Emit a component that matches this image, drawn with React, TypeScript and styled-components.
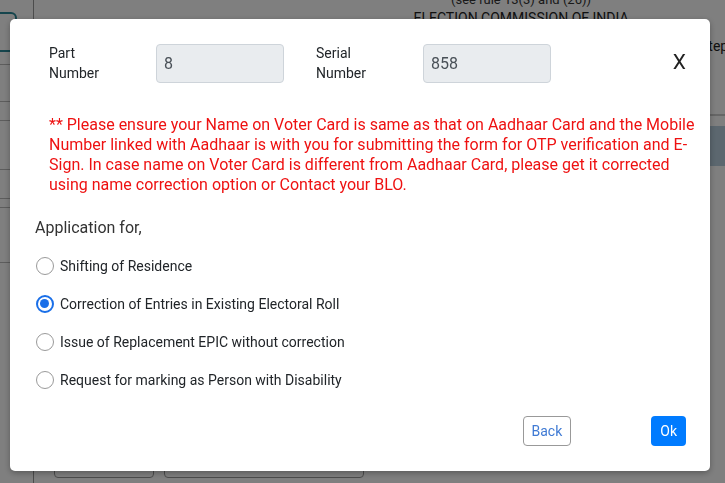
import React, { useState } from "react";
import styled, { createGlobalStyle } from "styled-components";

const options = [
  "Shifting of Residence",
  "Correction of Entries in Existing Electoral Roll",
  "Issue of Replacement EPIC without correction",
  "Request for marking as Person with Disability",
];

const App: React.FC = () => {
  const [selected, setSelected] = useState(1);

  return (
    <>
      <GlobalStyle />
      <Page>
        <Sidebar>
          <SideTab />
          <SideLine $gap={12} />
          <SideLine $gap={36} />
          <SideLine $gap={18} />
          <SideLine $gap={48} />
          <SideLine $gap={28} />
          <SideLine $gap={8} />
          <SideLine $gap={54} />
        </Sidebar>
        <Main>
          <RuleNote>(see rule 13(3) and (26))</RuleNote>
          <Heading>ELECTION COMMISSION OF INDIA</Heading>
          <StepRow>Steps</StepRow>
          <Divider />
          <Band />
          <BottomRow>
            <BottomBox $w={100} />
            <BottomBox $w={200} />
          </BottomRow>
        </Main>
      </Page>

      <Overlay />

      <Modal>
        <TopSection>
          <FieldRow>
            <FieldLabel>
              Part
              <br />
              Number
            </FieldLabel>
            <ReadOnlyInput value="8" readOnly />
            <FieldLabel $spaced>
              Serial
              <br />
              Number
            </FieldLabel>
            <ReadOnlyInput value="858" readOnly />
            <CloseButton>X</CloseButton>
          </FieldRow>

          <Warning>
            ** Please ensure your Name on Voter Card is same as that on Aadhaar Card and the Mobile
            Number linked with Aadhaar is with you for submitting the form for OTP verification and
            E-Sign. In case name on Voter Card is different from Aadhaar Card, please get it
            corrected using name correction option or Contact your BLO.
          </Warning>
        </TopSection>

        <SectionTitle>Application for,</SectionTitle>

        <OptionList>
          {options.map((label, i) => (
            <OptionRow key={label} onClick={() => setSelected(i)}>
              <RadioMark $checked={selected === i} />
              <OptionText>{label}</OptionText>
            </OptionRow>
          ))}
        </OptionList>

        <Footer>
          <BackButton>Back</BackButton>
          <OkButton>Ok</OkButton>
        </Footer>
      </Modal>
    </>
  );
};

const GlobalStyle = createGlobalStyle`
  html, body {
    margin: 0;
    padding: 0;
    width: 100%;
    height: 100%;
    overflow: hidden;
  }
  body {
    font-family: Roboto, "Liberation Sans", Arial, sans-serif;
    background: #ffffff;
    color: #212529;
  }
  * {
    box-sizing: border-box;
  }
`;

/* page behind the dialog */
const Page = styled.div`
  display: flex;
  height: 100vh;
  overflow: hidden;
`;

const Sidebar = styled.div`
  width: 34px;
  flex-shrink: 0;
  border-right: 1px solid #999;
  display: flex;
  flex-direction: column;
  padding-top: 12px;
`;

const SideTab = styled.div`
  height: 40px;
  width: 17px;
  border: 2px solid #2b8a9a;
  border-left: none;
  border-radius: 0 6px 6px 0;
`;

const SideLine = styled.div<{ $gap: number }>`
  margin-top: ${(p) => p.$gap}px;
  height: 1px;
  background: #bbb;
`;

const Main = styled.div`
  width: 974px;
  flex-shrink: 0;
  display: flex;
  flex-direction: column;
  align-items: center;
`;

const RuleNote = styled.div`
  margin-top: -8px;
  font-size: 13px;
  line-height: 16px;
  color: #333;
`;

const Heading = styled.div`
  margin-top: 2px;
  font-size: 14px;
  line-height: 16px;
  color: #222;
`;

const StepRow = styled.div`
  align-self: flex-start;
  margin-left: 666px;
  margin-top: 12px;
  font-size: 14px;
  color: #222;
`;

const Divider = styled.div`
  align-self: stretch;
  margin-top: 60px;
  height: 2px;
  background: #ccc;
`;

const Band = styled.div`
  align-self: stretch;
  margin-top: 10px;
  height: 40px;
  background: #b8cfdf;
`;

const BottomRow = styled.div`
  align-self: flex-start;
  margin-top: auto;
  margin-bottom: 5px;
  margin-left: 20px;
  display: flex;
  gap: 10px;
`;

const BottomBox = styled.div<{ $w: number }>`
  width: ${(p) => p.$w}px;
  height: 30px;
  border: 1px solid #999;
  border-radius: 4px;
`;

/* dialog */
const Overlay = styled.div`
  position: fixed;
  inset: 0;
  background: rgba(0, 0, 0, 0.5);
`;

const Modal = styled.div`
  position: fixed;
  top: 19px;
  left: 10px;
  width: 700px;
  height: 452px;
  background: #fff;
  border-radius: 5px;
  box-shadow: 0 2px 6px rgba(0, 0, 0, 0.3);
  padding: 24px 24px 25px 25px;
  display: flex;
  flex-direction: column;
`;

const TopSection = styled.div`
  padding-left: 14px;
`;

const FieldRow = styled.div`
  display: flex;
  align-items: center;
`;

const FieldLabel = styled.label<{ $spaced?: boolean }>`
  width: 107px;
  margin-left: ${(p) => (p.$spaced ? "32px" : "0")};
  font-size: 14px;
  line-height: 20px;
  color: #212529;
`;

const ReadOnlyInput = styled.input`
  width: 128px;
  height: 39px;
  padding: 0 7px;
  border: 1px solid #ced4da;
  border-radius: 4px;
  background: #e9ecef;
  font-family: inherit;
  font-size: 16px;
  color: #495057;
  outline: none;
`;

const CloseButton = styled.button`
  margin-left: auto;
  margin-top: -2px;
  padding: 0;
  border: none;
  background: none;
  font-family: inherit;
  font-size: 21px;
  line-height: 20px;
  color: #222;
  cursor: pointer;
`;

const Warning = styled.p`
  margin: 32px -10px 0 0;
  font-size: 16px;
  line-height: 20px;
  color: #ee1111;
`;

const SectionTitle = styled.div`
  margin-top: 23px;
  font-size: 16px;
  line-height: 20px;
  color: #333;
`;

const OptionList = styled.div`
  margin-top: 9px;
  display: flex;
  flex-direction: column;
`;

const OptionRow = styled.label`
  height: 38px;
  display: flex;
  align-items: center;
  gap: 6px;
  padding-left: 1px;
  cursor: pointer;
`;

const RadioMark = styled.span<{ $checked: boolean }>`
  position: relative;
  width: 18px;
  height: 18px;
  border-radius: 50%;
  flex-shrink: 0;
  border: ${(p) => (p.$checked ? "2.5px solid #1a6fe8" : "1.5px solid #9a9a9a")};
  background: #fff;

  &::after {
    content: "";
    display: ${(p) => (p.$checked ? "block" : "none")};
    position: absolute;
    top: 2px;
    left: 2px;
    width: 9px;
    height: 9px;
    border-radius: 50%;
    background: #1a6fe8;
  }
`;

const OptionText = styled.span`
  font-size: 14px;
  color: #212529;
`;

const Footer = styled.div`
  margin-top: auto;
  display: flex;
  justify-content: flex-end;
  gap: 80px;
`;

const BackButton = styled.button`
  height: 30px;
  padding: 0 8px;
  border: 1px solid #999;
  border-radius: 4px;
  background: #fff;
  font-family: inherit;
  font-size: 14px;
  color: #3f7ad4;
  cursor: pointer;
`;

const OkButton = styled.button`
  height: 30px;
  padding: 0 9px;
  border: none;
  border-radius: 4px;
  background: #007bff;
  font-family: inherit;
  font-size: 14px;
  color: #fff;
  cursor: pointer;
`;

export default App;
